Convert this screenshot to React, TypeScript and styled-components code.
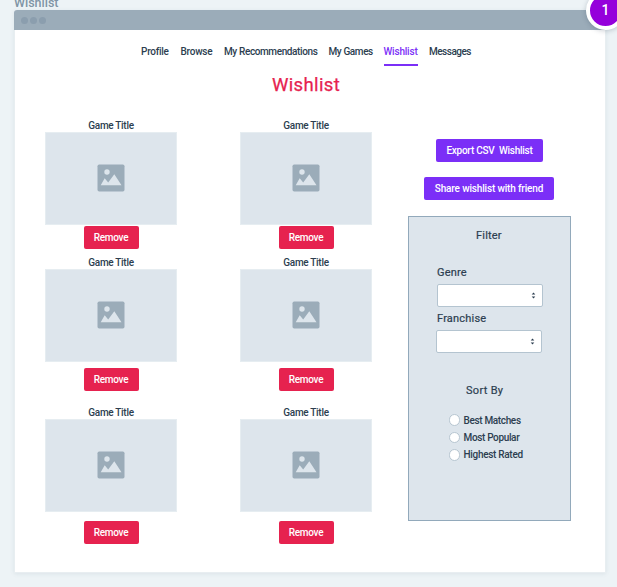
import React from "react";
import styled, { createGlobalStyle } from "styled-components";

const GlobalStyle = createGlobalStyle`
  * { box-sizing: border-box; }
  body {
    margin: 0;
    width: 617px;
    height: 587px;
    overflow: hidden;
    background: #edf3f6;
    color: #2c3e50;
    font-family: Roboto, "Open Sans", sans-serif;
    font-size: 10px;
    font-weight: 500;
  }
`;

const Page = styled.div`
  position: relative;
  width: 617px;
  height: 587px;
  overflow: hidden;
  padding-left: 14px;
`;

const ArtboardName = styled.div`
  height: 10px;
  display: flex;
  align-items: flex-end;
  line-height: 14px;
  font-size: 12.5px;
  color: #7f95a5;
`;

const Board = styled.main`
  width: 592px;
  height: 563px;
  background: #fff;
  border: 1px solid #e8eef1;
  border-top: 0;
  border-radius: 3px 3px 0 0;
  box-shadow: 0 1px 4px rgba(70, 100, 120, 0.1);
`;

const TitleBar = styled.div`
  height: 20px;
  margin: 0 -1px;
  padding-left: 7px;
  display: flex;
  align-items: center;
  gap: 2px;
  background: #9bacb9;
  border-radius: 3px 3px 0 0;
`;

const WindowDot = styled.span`
  width: 7px;
  height: 7px;
  border-radius: 50%;
  background: #8b9eae;
`;

const Nav = styled.nav`
  display: flex;
  height: 36px;
  padding: 12px 0 0 126px;
`;

const NavItem = styled.a<{ $width: number; $spacing: number; $active?: boolean }>`
  width: ${(p) => p.$width}px;
  height: 24px;
  margin-right: 11.5px;
  padding-top: 1px;
  line-height: 18px;
  white-space: nowrap;
  letter-spacing: ${(p) => p.$spacing}px;
  color: ${(p) => (p.$active ? "#7b2ff7" : "#2c3e50")};
  border-bottom: 2px solid ${(p) => (p.$active ? "#7b2ff7" : "transparent")};
`;

const Heading = styled.h1`
  margin: 0 0 0 257px;
  height: 52px;
  line-height: 39px;
  font-size: 18.5px;
  font-weight: 400;
  letter-spacing: 0.35px;
  color: #e6224f;
  -webkit-text-stroke: 0.25px #e6224f;
`;

const Content = styled.div`
  display: flex;
`;

const Games = styled.section`
  display: grid;
  grid-template-columns: 132px 132px;
  grid-template-rows: 137px 150px 150px;
  column-gap: 63px;
  margin-left: 30px;
`;

const Card = styled.article`
  display: flex;
  flex-direction: column;
  align-items: center;
`;

const GameTitle = styled.div`
  height: 14px;
  line-height: 15px;
  white-space: nowrap;
  letter-spacing: -0.3px;
`;

const Cover = styled.div`
  width: 132px;
  height: 93px;
  padding-bottom: 1px;
  display: flex;
  align-items: center;
  justify-content: center;
  background: #dde5ec;
  border: 1px solid #e6edf1;
`;

const Button = styled.button<{ $tone: string; $width: number; $top?: number; $spacing?: number }>`
  flex: none;
  width: ${(p) => p.$width}px;
  height: 23px;
  margin: ${(p) => p.$top ?? 0}px 0 0;
  padding: 0;
  border: 0;
  border-radius: 2px;
  background: ${(p) => p.$tone};
  color: #fff;
  font: 500 10px/23px Roboto, sans-serif;
  letter-spacing: ${(p) => p.$spacing ?? -0.25}px;
  white-space: pre;
`;

const Sidebar = styled.aside`
  width: 163px;
  margin-left: 36px;
  padding-top: 21px;
  display: flex;
  flex-direction: column;
  align-items: center;
`;

const ShareButton = styled(Button)`
  margin-right: 1px;
`;

const FilterPanel = styled.section`
  width: 163px;
  height: 305px;
  margin-top: 16px;
  background: #dde5ec;
  border: 1px solid #92a9bb;
`;

const PanelText = styled.div<{ $left: number; $top: number; $spacing?: number }>`
  height: 16px;
  margin: ${(p) => p.$top}px 0 0 ${(p) => p.$left}px;
  line-height: 16px;
  font-size: 11px;
  font-weight: 400;
  letter-spacing: ${(p) => p.$spacing ?? 0.2}px;
  -webkit-text-stroke: 0.2px #2c3e50;
`;

const Select = styled.div<{ $left: number }>`
  width: 106px;
  height: 23px;
  margin: 3px 0 0 ${(p) => p.$left}px;
  padding-right: 6px;
  display: flex;
  align-items: center;
  justify-content: flex-end;
  background: #fff;
  border: 1px solid #b4c4d0;
  border-radius: 2px;
`;

const RadioList = styled.div`
  margin: 12.5px 0 0 39.5px;
`;

const Radio = styled.label<{ $spacing: number }>`
  display: flex;
  align-items: center;
  gap: 3.5px;
  height: 17.4px;
  white-space: nowrap;
  letter-spacing: ${(p) => p.$spacing}px;

  &::before {
    content: "";
    width: 9.5px;
    height: 9.5px;
    border: 1px solid #b7c6d1;
    border-radius: 50%;
    background: #fff;
  }
`;

const Badge = styled.div`
  position: absolute;
  left: 586px;
  top: -9px;
  width: 39px;
  height: 39px;
  border: 4px solid #fff;
  border-radius: 50%;
  background: #9500db;
  color: #fff;
  font-size: 14px;
  line-height: 31px;
  text-align: center;
  box-shadow: 0 1px 5px rgba(40, 60, 80, 0.25);
`;

const PictureIcon = () => (
  <svg width="28" height="28" viewBox="0 0 28 28">
    <rect x="0.5" y="0.5" width="27" height="27" rx="1.7" fill="#9bacb9" />
    <circle cx="10" cy="8" r="2.7" fill="#dde5ec" />
    <path d="M3.7 21.3 7.7 14.3 11.2 18.4 17.3 10.2 24.5 21.3Z" fill="#dde5ec" />
  </svg>
);

const SortArrows = () => (
  <svg width="5" height="7" viewBox="0 0 5 7">
    <path d="M0.7 2.6 2.5 0.4 4.3 2.6ZM0.7 4.4H4.3L2.5 6.6Z" fill="#2c3e50" />
  </svg>
);

const NAV = [
  { label: "Profile", width: 28, spacing: -0.25 },
  { label: "Browse", width: 32, spacing: -0.25 },
  { label: "My Recommendations", width: 93, spacing: -0.38 },
  { label: "My Games", width: 43.5, spacing: -0.4 },
  { label: "Wishlist", width: 34, spacing: -0.2, active: true },
  { label: "Messages", width: 42, spacing: -0.5 },
];

const REMOVE_OFFSETS = [1, 1, 6, 6, 9, 9];

export default function App() {
  return (
    <Page>
      <GlobalStyle />
      <ArtboardName>Wishlist</ArtboardName>
      <Board>
        <TitleBar>
          <WindowDot />
          <WindowDot />
          <WindowDot />
        </TitleBar>
        <Nav>
          {NAV.map((n) => (
            <NavItem key={n.label} $width={n.width} $spacing={n.spacing} $active={n.active}>
              {n.label}
            </NavItem>
          ))}
        </Nav>
        <Heading>Wishlist</Heading>
        <Content>
          <Games>
            {REMOVE_OFFSETS.map((top, i) => (
              <Card key={i}>
                <GameTitle>Game Title</GameTitle>
                <Cover>
                  <PictureIcon />
                </Cover>
                <Button $tone="#e6224f" $width={55} $top={top}>Remove</Button>
              </Card>
            ))}
          </Games>
          <Sidebar>
            <Button $tone="#7b2ff7" $width={107}>{"Export CSV  Wishlist"}</Button>
            <ShareButton $tone="#7b2ff7" $width={130} $top={15} $spacing={-0.16}>Share wishlist with friend</ShareButton>
            <FilterPanel>
              <PanelText $left={67} $top={11}>Filter</PanelText>
              <PanelText $left={28} $top={21}>Genre</PanelText>
              <Select $left={28}><SortArrows /></Select>
              <PanelText $left={28} $top={4}>Franchise</PanelText>
              <Select $left={27}><SortArrows /></Select>
              <PanelText $left={57} $top={30} $spacing={0.3}>Sort By</PanelText>
              <RadioList>
                <Radio $spacing={-0.35}>Best Matches</Radio>
                <Radio $spacing={-0.35}>Most Popular</Radio>
                <Radio $spacing={-0.3}>Highest Rated</Radio>
              </RadioList>
            </FilterPanel>
          </Sidebar>
        </Content>
      </Board>
      <Badge>1</Badge>
    </Page>
  );
}
